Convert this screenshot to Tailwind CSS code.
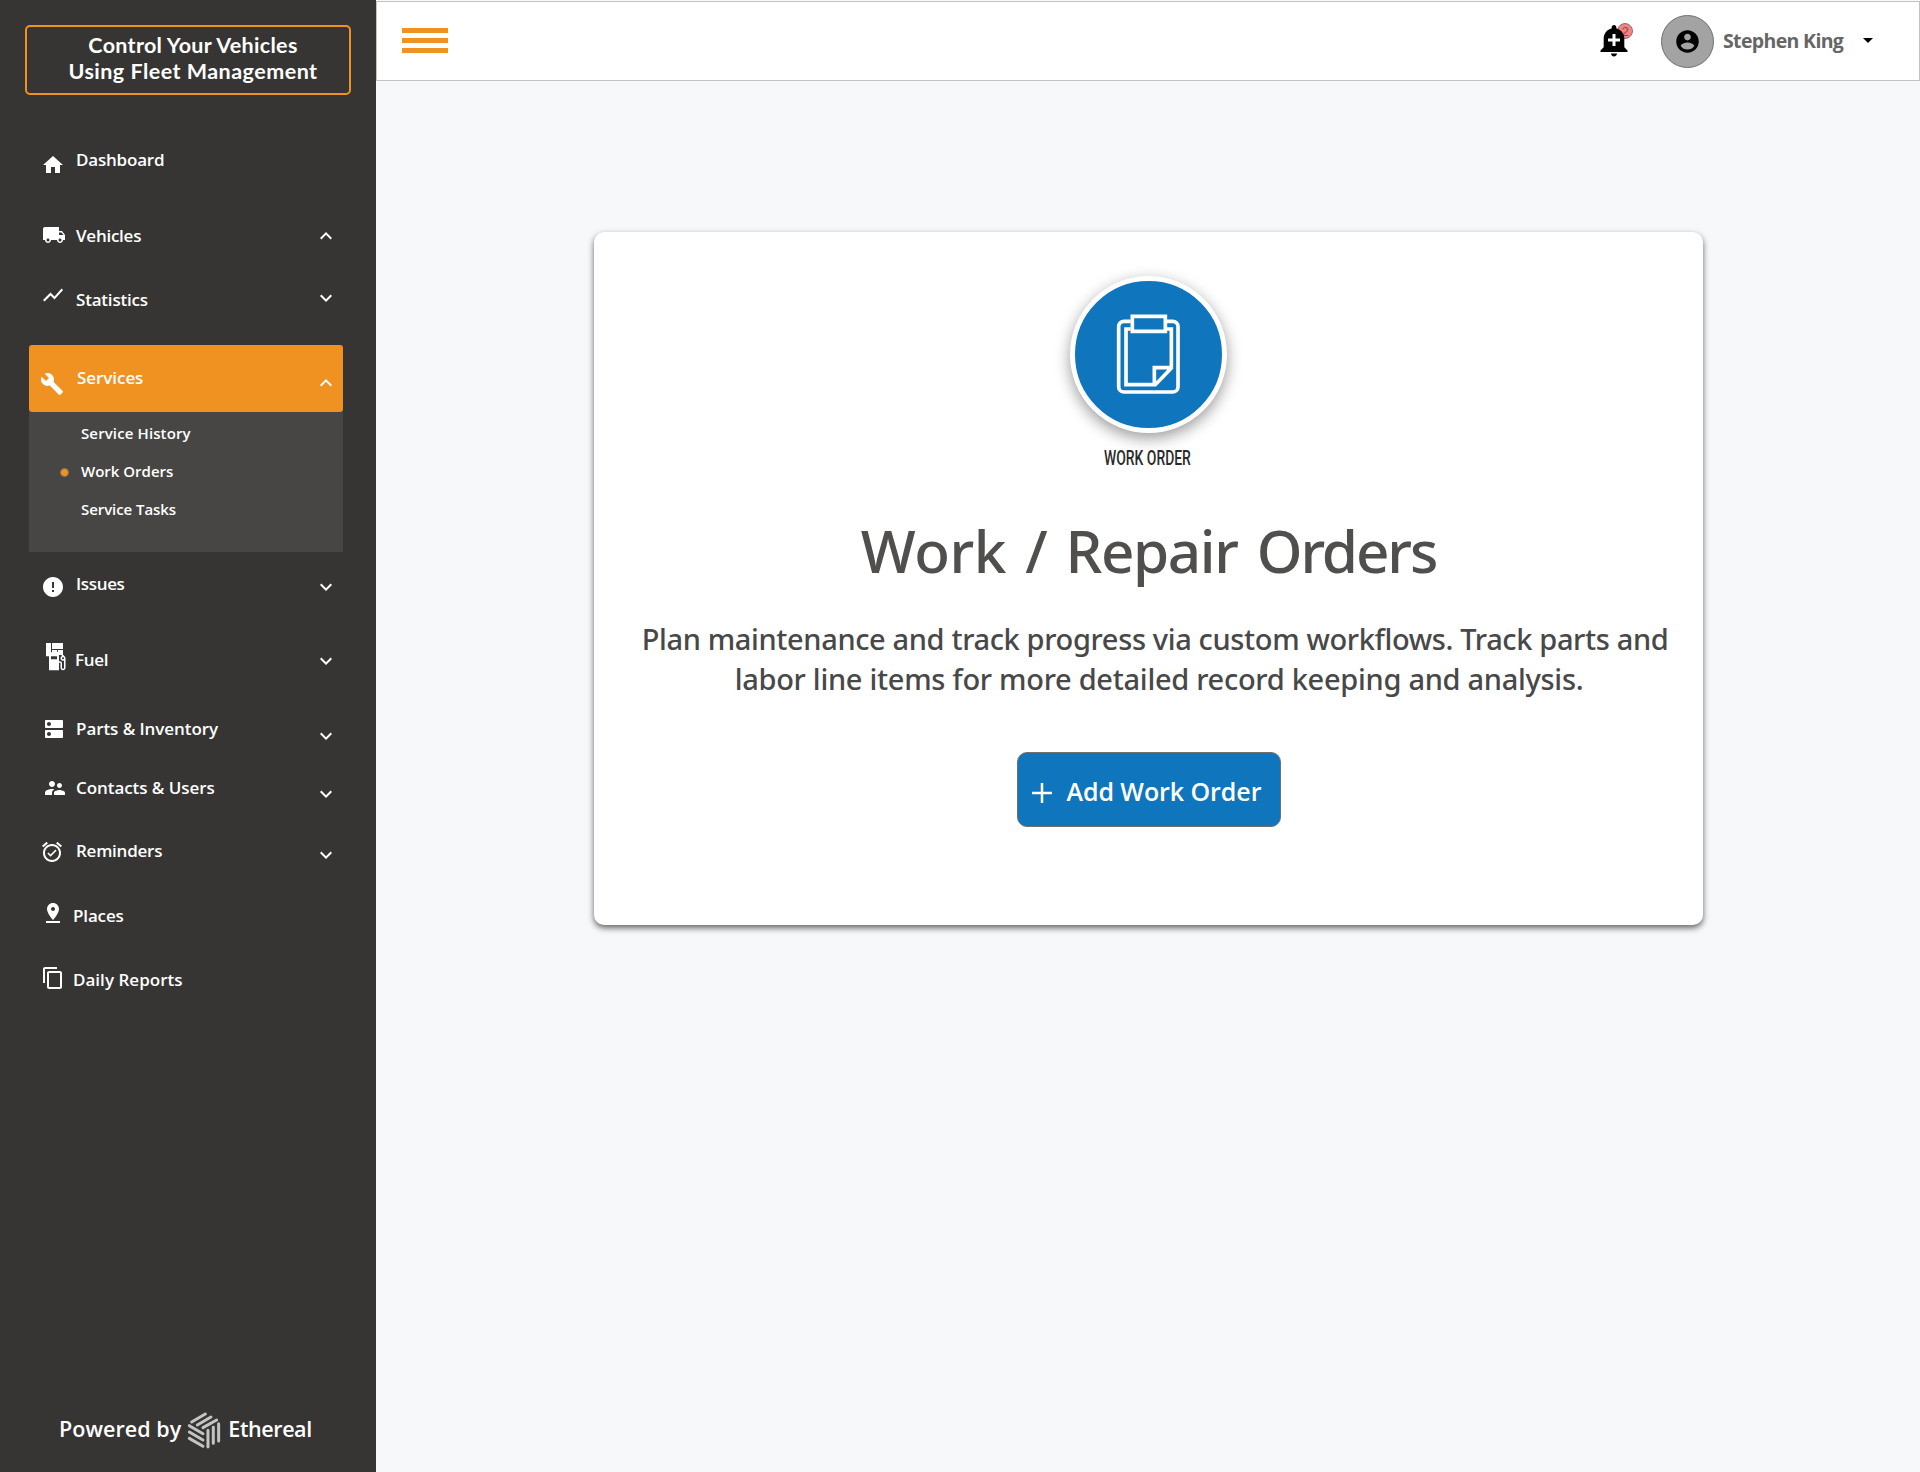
<!DOCTYPE html>
<html lang="en">
<head>
<meta charset="utf-8">
<title>Work Orders</title>
<script src="https://cdn.jsdelivr.net/npm/@tailwindcss/browser@4"></script>
</head>
<body class="flex h-[1472px] w-[1920px] overflow-hidden bg-[#f7f8fa] font-['Open_Sans',sans-serif]">

<!-- Sidebar -->
<aside class="flex h-full w-[376px] shrink-0 flex-col bg-[#363533] text-white">
  <div class="mt-[25px] ml-[25px] h-[70px] w-[326px] rounded-[5px] border-2 border-[#f09222] pt-[5px] pl-[10px] text-center font-['Lato',sans-serif] text-[21.5px] leading-[26px] font-bold whitespace-nowrap">
    <div class="tracking-[0.3px]">Control Your Vehicles</div>
    <div class="tracking-[0.48px]">Using Fleet Management</div>
  </div>

  <nav class="mt-[52px] flex flex-col text-[17px] leading-[26px] font-semibold whitespace-nowrap">
    <a class="flex h-[76px] items-start pl-10">
      <span class="w-[36px]"><svg class="mt-[6px] ml-px size-6" viewBox="0 0 24 24" fill="currentColor"><path d="M10 20v-6h4v6h5v-8h3L12 3 2 12h3v8z"/></svg></span>
      <span class="tracking-[-0.2px]">Dashboard</span>
    </a>
    <a class="flex h-16 items-start pl-10">
      <span class="w-[36px]"><svg class="ml-[2px] size-6" viewBox="0 0 24 24" fill="currentColor"><path d="M20 8h-3V4H3c-1.1 0-2 .9-2 2v11h2c0 1.66 1.34 3 3 3s3-1.34 3-3h6c0 1.66 1.34 3 3 3s3-1.34 3-3h2v-5l-3-4zM6 18.500c-.83 0-1.500-.67-1.500-1.500s.67-1.500 1.500-1.500 1.500.67 1.500 1.500-.67 1.500-1.500 1.500zm13.500-9l1.960 2.500H17V9.500h2.500zm-1.500 9c-.83 0-1.500-.67-1.500-1.500s.67-1.500 1.500-1.500 1.500.67 1.500 1.500-.67 1.500-1.500 1.500z"/></svg></span>
      <span class="w-[238px] tracking-[-0.25px]">Vehicles</span>
      <svg class="mt-px size-6" viewBox="0 0 24 24" fill="currentColor"><path d="M12 8l-6 6 1.410 1.410L12 10.830l4.590 4.580L18 14z"/></svg>
    </a>
    <a class="flex h-[58px] items-start pl-10">
      <span class="w-[36px]"><svg class="-mt-[4px] ml-px size-6" viewBox="0 0 24 24" fill="currentColor"><path d="M3.500 18.490l6-6.010 4 4L22 6.920l-1.410-1.410-7.090 7.970-4-4L2 16.990z"/></svg></span>
      <span class="w-[238px] tracking-[-0.2px]">Statistics</span>
      <svg class="-mt-px size-6" viewBox="0 0 24 24" fill="currentColor"><path d="M16.590 8.590L12 13.170 7.410 8.590 6 10l6 6 6-6z"/></svg>
    </a>

    <!-- Expanded group -->
    <div class="ml-[29px] h-[226px] w-[314px]">
      <a class="flex h-[67px] items-start rounded-[3px] bg-[#f09222] pt-5 pl-[11px]">
        <span class="w-[37px]"><svg class="mt-[7px] size-6" viewBox="0 0 24 24" fill="currentColor"><path d="M22.700 19l-9.100-9.100c.9-2.300.4-5-1.500-6.900-2-2-5-2.400-7.400-1.300L9 6 6 9 1.600 4.700C.4 7.100.9 10.100 2.900 12.100c1.900 1.900 4.600 2.400 6.900 1.500l9.100 9.100c.4.4 1 .4 1.400 0l2.300-2.300c.5-.4.5-1.100.1-1.400z"/></svg></span>
        <span class="w-[237px] tracking-[-0.06px]">Services</span>
        <svg class="mt-[6px] size-6" viewBox="0 0 24 24" fill="currentColor"><path d="M12 8l-6 6 1.410 1.410L12 10.830l4.590 4.580L18 14z"/></svg>
      </a>
      <div class="flex h-[140px] flex-col bg-[#474644] pt-[9px] text-[15px] leading-6">
        <a class="h-[38px] pl-[52px] tracking-[0.12px]">Service History</a>
        <a class="flex h-[38px] items-start pl-[31px]"><span class="mt-[9px] mr-3 size-[9px] rounded-full border border-[#8a7050] bg-[#f09222]"></span>Work Orders</a>
        <a class="h-[38px] pl-[52px] tracking-[-0.07px]">Service Tasks</a>
      </div>
    </div>

    <a class="flex h-[76px] items-start pl-10">
      <span class="w-[36px]"><svg class="mt-1 ml-px size-6" viewBox="0 0 24 24" fill="currentColor"><path d="M12 2C6.480 2 2 6.480 2 12s4.480 10 10 10 10-4.480 10-10S17.520 2 12 2zm1 15h-2v-2h2v2zm0-4h-2V7h2v6z"/></svg></span>
      <span class="w-[238px] tracking-[-0.35px]">Issues</span>
      <svg class="mt-1 size-6" viewBox="0 0 24 24" fill="currentColor"><path d="M16.590 8.590L12 13.170 7.410 8.590 6 10l6 6 6-6z"/></svg>
    </a>
    <a class="flex h-[69px] items-start pl-10">
      <span class="w-[35px]"><svg class="-mt-[4px] ml-[6px] h-7 w-[21px]" viewBox="0 0 21 28" fill="currentColor"><path d="M0 0h5v13.300H0zM6 0h11v6H6zM6 7h5.200v2h.8V7h5v5H6z"/><path transform="translate(-1 6.300)" fill-rule="evenodd" d="M19.770 7.230l.01-.01-3.720-3.720L15 4.560l2.110 2.110c-.94.36-1.610 1.260-1.610 2.330 0 1.380 1.120 2.500 2.500 2.500.36 0 .69-.08 1-.21v7.210c0 .55-.45 1-1 1s-1-.45-1-1V14c0-1.100-.9-2-2-2h-1V5c0-1.100-.9-2-2-2H6c-1.100 0-2 .9-2 2v16h10v-7.500h1.500v5c0 1.380 1.120 2.500 2.500 2.500s2.500-1.120 2.500-2.500V9c0-.69-.28-1.320-.73-1.770zM12 10H6V7h6v3zm6 0c-.55 0-1-.45-1-1s.45-1 1-1 1 .45 1 1-.45 1-1 1z"/></svg></span>
      <span class="w-[239px] tracking-[-0.3px]">Fuel</span>
      <svg class="mt-[2px] size-6" viewBox="0 0 24 24" fill="currentColor"><path d="M16.590 8.590L12 13.170 7.410 8.590 6 10l6 6 6-6z"/></svg>
    </a>
    <a class="flex h-[59px] items-start pl-10">
      <span class="w-[36px]"><svg class="mt-px ml-[2px] size-6" viewBox="0 0 24 24" fill="currentColor"><path d="M20 13H4c-.55 0-1 .45-1 1v6c0 .55.45 1 1 1h16c.55 0 1-.45 1-1v-6c0-.55-.45-1-1-1zM7 19c-1.100 0-2-.9-2-2s.9-2 2-2 2 .9 2 2-.9 2-2 2zM20 3H4c-.55 0-1 .45-1 1v6c0 .55.45 1 1 1h16c.55 0 1-.45 1-1V4c0-.55-.45-1-1-1zM7 9c-1.100 0-2-.9-2-2s.9-2 2-2 2 .9 2 2-.9 2-2 2z"/></svg></span>
      <span class="w-[238px] tracking-[-0.07px]">Parts &amp; Inventory</span>
      <svg class="mt-2 size-6" viewBox="0 0 24 24" fill="currentColor"><path d="M16.590 8.590L12 13.170 7.410 8.590 6 10l6 6 6-6z"/></svg>
    </a>
    <a class="flex h-[63px] items-start pl-10">
      <span class="w-[36px]"><svg class="mt-px ml-[3px] size-6" viewBox="0 0 24 24" fill="currentColor"><path d="M16.500 12c1.380 0 2.490-1.120 2.490-2.500S17.880 7 16.500 7C15.120 7 14 8.120 14 9.500s1.120 2.500 2.500 2.500zM9 11c1.660 0 2.990-1.340 2.990-3S10.660 5 9 5C7.340 5 6 6.340 6 8s1.340 3 3 3zm7.500 3c-1.830 0-5.500.92-5.500 2.750V19h11v-2.250c0-1.830-3.670-2.750-5.500-2.750zM9 13c-2.330 0-7 1.170-7 3.500V19h7v-2.250c0-.85.33-2.340 2.370-3.470C10.500 13.100 9.660 13 9 13z"/></svg></span>
      <span class="w-[238px] tracking-[-0.06px]">Contacts &amp; Users</span>
      <svg class="mt-[7px] size-6" viewBox="0 0 24 24" fill="currentColor"><path d="M16.590 8.590L12 13.170 7.410 8.590 6 10l6 6 6-6z"/></svg>
    </a>
    <a class="flex h-[65px] items-start pl-10">
      <span class="w-[36px]"><svg class="mt-[2px] size-6" viewBox="0 0 24 24" fill="currentColor"><path d="M22 5.720l-4.600-3.860-1.290 1.530 4.600 3.860L22 5.720zM7.880 3.390L6.600 1.860 2 5.710l1.290 1.530 4.590-3.850zM12 4c-4.970 0-9 4.030-9 9s4.020 9 9 9c4.970 0 9-4.030 9-9s-4.030-9-9-9zm0 16c-3.870 0-7-3.130-7-7s3.130-7 7-7 7 3.130 7 7-3.130 7-7 7zm-1.460-5.470L8.410 12.400l-1.060 1.060 3.180 3.180 6-6-1.060-1.060-4.930 4.950z"/></svg></span>
      <span class="w-[238px] tracking-[-0.25px]">Reminders</span>
      <svg class="mt-[5px] size-6" viewBox="0 0 24 24" fill="currentColor"><path d="M16.590 8.590L12 13.170 7.410 8.590 6 10l6 6 6-6z"/></svg>
    </a>
    <a class="flex h-16 items-start pl-10">
      <span class="w-[33px]"><svg class="-mt-[2px] ml-px size-6" viewBox="0 0 24 24" fill="currentColor"><path d="M18 8c0-3.310-2.690-6-6-6S6 4.690 6 8c0 4.500 6 11 6 11s6-6.500 6-11zm-8 0c0-1.100.9-2 2-2s2 .9 2 2-.89 2-2 2c-1.100 0-2-.9-2-2zM5 20v2h14v-2H5z"/></svg></span>
      <span class="tracking-[-0.15px]">Places</span>
    </a>
    <a class="flex h-6 items-start pl-10">
      <span class="w-[33px]"><svg class="-mt-px ml-px size-6" viewBox="0 0 24 24" fill="currentColor"><path d="M16 1H4c-1.100 0-2 .9-2 2v14h2V3h12V1zm3 4H8c-1.100 0-2 .9-2 2v14c0 1.100.9 2 2 2h11c1.100 0 2-.9 2-2V7c0-1.100-.9-2-2-2zm0 16H8V7h11v14z"/></svg></span>
      <span class="tracking-[0.02px]">Daily Reports</span>
    </a>
  </nav>

  <footer class="mt-auto mb-[22px] flex items-start pl-[59px] text-[21.5px] leading-7 font-semibold whitespace-nowrap">
    <span class="mt-[4px] w-[128px] tracking-[0.05px]">Powered by</span>
    <svg class="h-[38.700px] w-[34.300px]" viewBox="0 0 103 116" fill="none" stroke="#c4c4c3" stroke-width="9" stroke-linecap="round">
      <path d="M14 33L55 9M31 42L72 18M48 50L89 27M7 44l41 24M7 63l41 24M7 82l41 24M63 58v50M79 49v48M95 38v52"/>
    </svg>
    <span class="mt-[4px] ml-[7px] tracking-[-0.4px]">Ethereal</span>
  </footer>
</aside>

<div class="flex flex-1 flex-col">
  <!-- Top bar -->
  <header class="mt-px flex h-20 shrink-0 items-start border border-[#c3c3c5] bg-white">
    <div class="mt-[26px] ml-[25px] flex w-[46px] flex-col gap-[5px]">
      <span class="h-[5px] bg-[#f09222]"></span>
      <span class="h-[5px] bg-[#f09222]"></span>
      <span class="h-[5px] bg-[#f09222]"></span>
    </div>
    <div class="relative mt-5 ml-auto size-9">
      <span class="absolute top-px left-[21px] flex size-4 items-center justify-center rounded-full border border-[#8a7070] bg-[#fb8080] font-['Liberation_Sans',sans-serif] text-[13px] leading-none text-[#5f5f5f]">2</span>
      <svg class="relative size-9" viewBox="0 0 24 24"><path d="M8 7.500h8v9H8z" fill="#fff"/><path d="M10.010 21.010c0 1.100.89 1.990 1.990 1.990s1.990-.89 1.990-1.990h-3.980zm8.870-4.190V11c0-3.250-2.250-5.970-5.290-6.690v-.72C13.590 2.710 12.880 2 12 2s-1.590.71-1.590 1.590v.72C7.370 5.030 5.120 7.750 5.120 11v5.820L3 18.940V20h18v-1.060l-2.120-2.120zM16 13.010h-3v3h-2v-3H8V11h3V8h2v3h3v2.010z"/></svg>
    </div>
    <div class="mt-[13px] ml-[29px] flex size-[53px] items-center justify-center rounded-full border border-[#707070] bg-[#a3a3a3]">
      <svg class="size-[27px]" viewBox="0 0 24 24"><path d="M12 2C6.480 2 2 6.480 2 12s4.480 10 10 10 10-4.480 10-10S17.520 2 12 2zm0 3c1.660 0 3 1.340 3 3s-1.340 3-3 3-3-1.340-3-3 1.340-3 3-3zm0 14.200c-2.500 0-4.710-1.280-6-3.220.03-1.990 4-3.080 6-3.080 1.990 0 5.970 1.090 6 3.080-1.290 1.940-3.500 3.220-6 3.220z"/></svg>
    </div>
    <span class="mt-[25px] ml-[9px] w-[133px] text-[19.5px] leading-7 font-bold tracking-[-0.65px] whitespace-nowrap text-[#666]">Stephen King</span>
    <svg class="mt-[26px] mr-[39px] size-6" viewBox="0 0 24 24"><path d="M7 10l5 5 5-5z"/></svg>
  </header>

  <!-- Empty-state card -->
  <main class="mt-[151px] ml-[218px] flex h-[693px] w-[1109px] flex-col items-center rounded-[10px] bg-white shadow-[0_3px_6px_rgba(0,0,0,0.6)]">
    <div class="mt-[44px] flex size-[157px] items-center justify-center rounded-full border-5 border-white bg-[#0f75bc] shadow-[0_5px_15px_rgba(0,0,0,0.4)]">
      <svg class="h-[82.700px] w-[66.700px]" viewBox="225 160 200 248" fill="none" stroke="#fff" stroke-width="11">
        <path d="M272 185H252a16 16 0 0 0-16 16V381a16 16 0 0 0 16 16H398a16 16 0 0 0 16-16V201a16 16 0 0 0-16-16H380"/>
        <path d="M272 208H258V375H346L394 325V208H380M343 377V324H394"/>
        <path d="M277 170h99v45h-99z"/>
      </svg>
    </div>
    <div class="mt-[13px] -ml-[2px] scale-x-[0.695] font-['Roboto',sans-serif] text-[20px] leading-6 font-medium whitespace-nowrap text-[#2a2a2a]">WORK ORDER</div>
    <h1 class="mt-[45px] font-['Noto_Sans',sans-serif] text-[58.4px] leading-[72px] font-medium tracking-[-1.4px] [word-spacing:5.4px] whitespace-nowrap text-[#504f4d]"><span class="tracking-[-0.4px]">Work</span> / Repair <span class="tracking-[-2.1px]">Orders</span></h1>
    <p class="mt-[32px] pl-[13px] text-center font-['Noto_Sans',sans-serif] text-[29px] leading-10 font-medium tracking-[-0.36px] whitespace-nowrap text-[#484848]">Plan maintenance and track progress via custom workflows. Track parts and<br><span class="pl-2 tracking-[-0.29px]">labor line items for more detailed record keeping and analysis.</span></p>
    <button class="mt-[53px] flex h-[75px] w-[264px] items-start rounded-[10px] border border-[#707070] bg-[#0f75bc] pt-[22px] pl-[14px] text-[25px] leading-8 font-semibold tracking-[-0.07px] whitespace-nowrap text-white">
      <svg class="mt-[8px] mr-[15px] size-5" viewBox="0 0 20 20" stroke="#fff" stroke-width="2.500"><path d="M10 0v20M0 10h20"/></svg>Add Work Order
    </button>
  </main>
</div>
</body>
</html>
